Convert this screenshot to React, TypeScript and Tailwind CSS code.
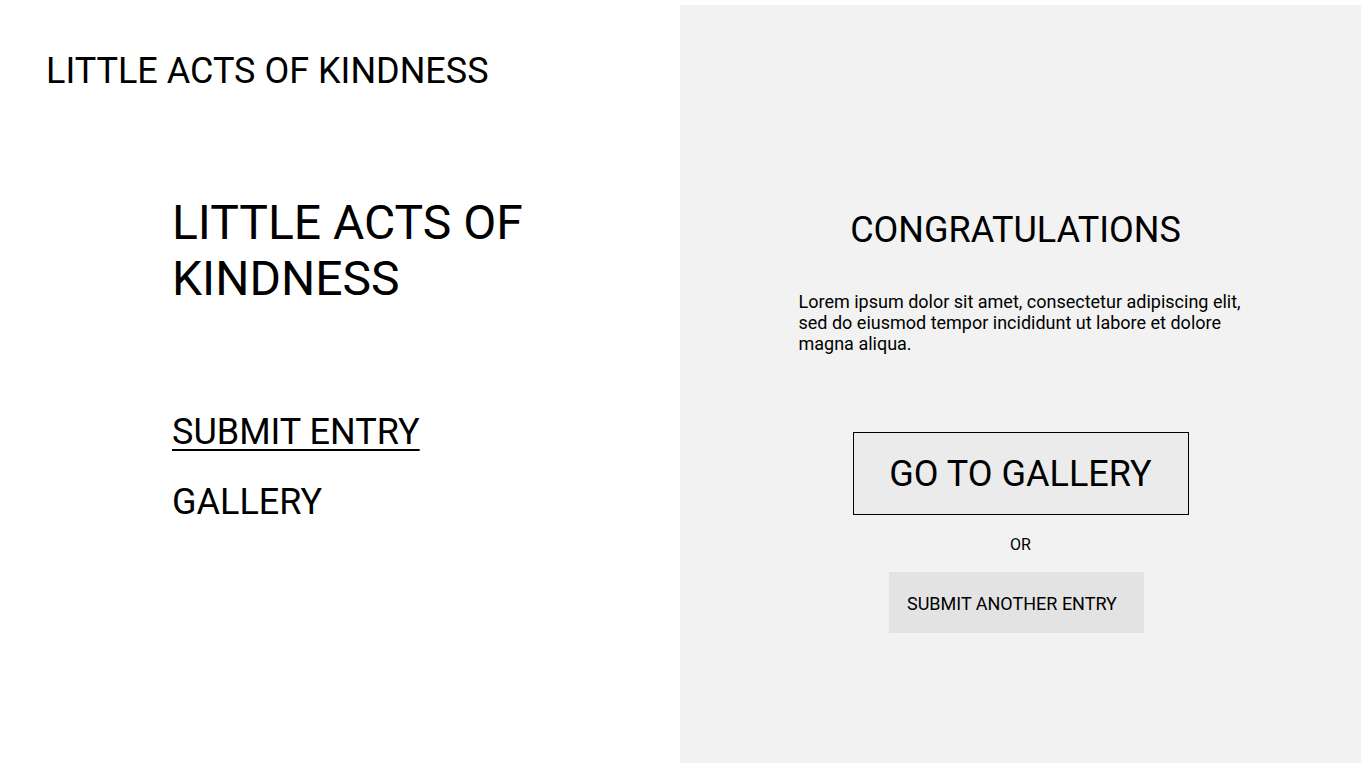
export default function App() {
  return (
    <div className="flex h-[768px] w-[1366px] bg-white font-['Roboto',sans-serif] text-black">
      {/* Left side: brand + nav */}
      <div className="flex w-[680px] shrink-0 flex-col pl-[46px] pt-[50px]">
        <div className="text-[36px] leading-[42px]">LITTLE ACTS OF KINDNESS</div>

        <div className="mt-[103px] pl-[126px]">
          <h1 className="w-[380px] text-[48px] leading-[56px]">LITTLE ACTS OF KINDNESS</h1>

          <nav className="mt-[104px] flex flex-col gap-[28px]">
            <a className="text-[36px] leading-[42px] underline decoration-[2px] underline-offset-[5px]">
              SUBMIT ENTRY
            </a>
            <a className="text-[36px] leading-[42px]">GALLERY</a>
          </nav>
        </div>
      </div>

      {/* Right side: confirmation panel */}
      <div className="my-[5px] mr-[5px] flex flex-1 flex-col items-center bg-[#f2f2f2] pt-[204px]">
        <h2 className="pr-[10px] text-[36px] leading-[42px]">CONGRATULATIONS</h2>

        <p className="mt-[40px] w-[448px] pl-[2px] text-[18px] leading-[21px]">
          Lorem ipsum dolor sit amet, consectetur adipiscing elit, sed do eiusmod tempor incididunt ut labore et
          dolore magna aliqua.
        </p>

        <button className="mt-[78px] flex h-[83px] w-[336px] items-center justify-center border border-black bg-[#ebebeb] text-[36px] leading-[42px]">
          GO TO GALLERY
        </button>

        <div className="mt-[20px] text-[16px] leading-[19px]">OR</div>

        <div className="mr-[8px] mt-[18px]">
          <button className="h-[61px] w-[255px] bg-[#e3e3e3] pl-[18px] pt-[2px] text-left text-[18px] leading-[21px]">
            SUBMIT ANOTHER ENTRY
          </button>
        </div>
      </div>
    </div>
  );
}
